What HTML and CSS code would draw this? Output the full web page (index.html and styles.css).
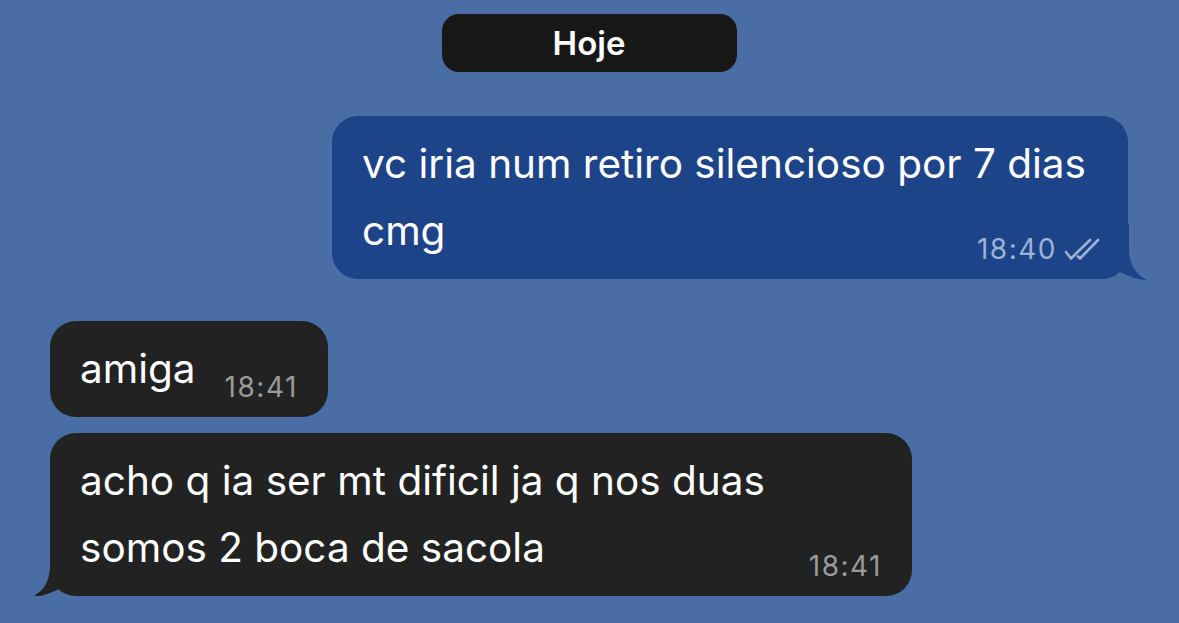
FILE: index.html
```html
<!DOCTYPE html>
<html lang="pt">
<head>
    <meta charset="UTF-8">
    <title>Conversa</title>
    <link rel="stylesheet" href="styles.css">
</head>
<body>
    <div class="chat">
        <div class="day">
            <span class="day-pill">Hoje</span>
        </div>

        <div class="row row-out">
            <div class="bubble bubble-out">
                vc iria num retiro silencioso por 7 dias cmg
                <span class="meta">18:40
                    <svg class="ticks" width="36" height="22" viewBox="0 0 36 22">
                        <path d="M2 14 L7 20.5 L26 2" />
                        <path d="M14 18.5 L16 20.5 L34 2" />
                    </svg>
                </span>
                <svg class="tail tail-out" width="40" height="56" viewBox="0 0 40 56">
                    <path d="M0 0 H21 V24 C21 40 27 50 39 56 C30 56 20 52 10 47 H0 Z" />
                </svg>
            </div>
        </div>

        <div class="row row-in first">
            <div class="bubble bubble-in">
                amiga
                <span class="meta">18:41</span>
            </div>
        </div>

        <div class="row row-in">
            <div class="bubble bubble-in">
                acho q ia ser mt dificil ja q nos duas somos 2 boca de sacola
                <span class="meta">18:41</span>
                <svg class="tail tail-in" width="40" height="56" viewBox="0 0 40 56">
                    <path d="M40 0 H19 V24 C19 40 13 50 1 56 C10 56 20 52 30 47 H40 Z" />
                </svg>
            </div>
        </div>
    </div>
</body>
</html>
```

FILE: styles.css
```css
body {
    margin: 0;
    background: #4a6da6;
    font-family: Inter, "Noto Sans", sans-serif;
    color: #ffffff;
}
.chat {
    padding: 14px 51px 0 50px;
}
.day {
    display: flex;
    justify-content: center;
    margin-bottom: 44px;
}
.day-pill {
    display: block;
    width: 295px;
    height: 58px;
    line-height: 58px;
    text-align: center;
    background: #171717;
    border-radius: 17px;
    font-size: 33px;
    font-weight: 600;
}
.row {
    display: flex;
}
.row-out {
    justify-content: flex-end;
    margin-bottom: 42px;
}
.row-in.first {
    margin-bottom: 16px;
}
.bubble {
    position: relative;
    display: flow-root;
    box-sizing: border-box;
    padding: 14px 30px 15px 30px;
    border-radius: 26px;
    font-size: 40.5px;
    line-height: 67px;
}
.bubble-out {
    width: 796px;
    background: #1d4489;
}
.bubble-in {
    max-width: 862px;
    background: #222222;
}
.meta {
    float: right;
    margin-top: 37px;
    margin-left: 29px;
    font-size: 28px;
    letter-spacing: 1.5px;
    line-height: 30px;
    color: #9b9b9b;
    display: flex;
    align-items: center;
    gap: 7px;
}
.bubble-out .meta {
    color: #9db2d6;
    margin-right: -2px;
}
.ticks {
    fill: none;
    stroke: #9db2d6;
    stroke-width: 2.6;
    stroke-linecap: round;
    stroke-linejoin: round;
}
.tail {
    position: absolute;
    bottom: -1px;
}
.tail-out {
    right: -20px;
    fill: #1d4489;
}
.tail-in {
    left: -19px;
    fill: #222222;
}
```
